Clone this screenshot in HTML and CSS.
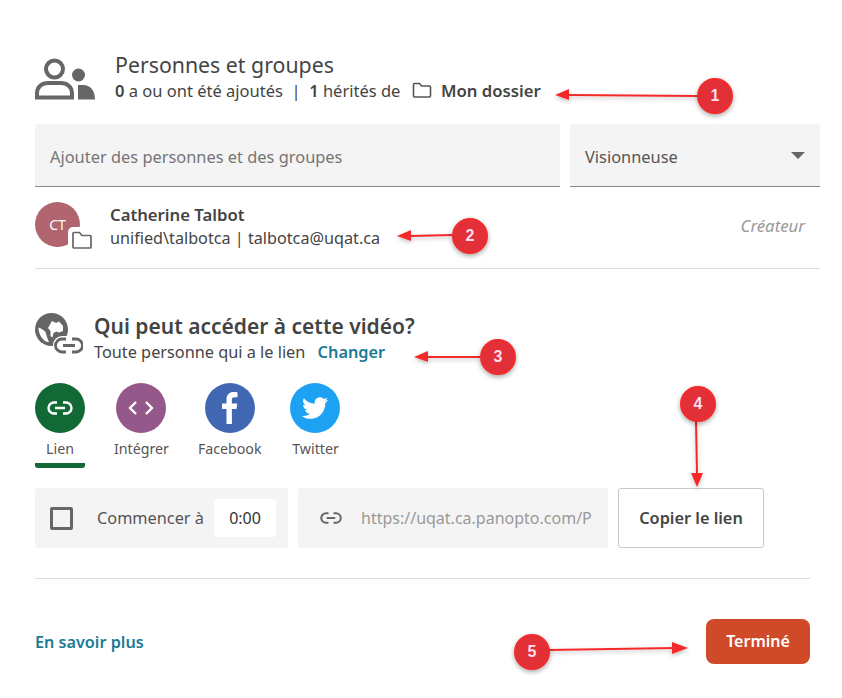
FILE: index.html
```html
<!DOCTYPE html>
<html lang="fr">
<head>
	<meta charset="utf-8"/>
	<title>Partager</title>
	<link rel="stylesheet" href="styles.css">
</head>
<body>
<div class="dialog">
	<div class="people-head">
		<svg class="people-icon" width="60" height="42" viewBox="0 0 60 42">
			<circle cx="19.500" cy="11" r="8.500" fill="none" stroke="#666" stroke-width="4"/>
			<path d="M2 39.500V35c0-6 5-10 11-10h13c6 0 11 4 11 10v4.500z" fill="none" stroke="#666" stroke-width="4"/>
			<circle cx="43.500" cy="17" r="6.500" fill="#666"/>
			<path d="M43 41.500V27h5c7 0 12 5 12 14.500z" fill="#666"/>
		</svg>
		<div>
			<h2 class="title">Personnes et groupes</h2>
			<p class="sub"><b>0</b> a ou ont été ajoutés &nbsp;|&nbsp; <b>1</b> hérités de
				<svg class="folder-inline" width="20" height="16" viewBox="0 0 20 16"><path d="M1.500 14V2.500c0-.6.4-1 1-1h5l2 2.500h8c.6 0 1 .4 1 1V14c0 .6-.4 1-1 1h-15c-.6 0-1-.4-1-1z" fill="none" stroke="#555" stroke-width="1.600"/></svg>
				<b class="folder-name">Mon dossier</b></p>
		</div>
	</div>

	<div class="add-row">
		<div class="field add-field">Ajouter des personnes et des groupes</div>
		<div class="field role-field">Visionneuse<span class="caret"></span></div>
	</div>

	<div class="person">
		<div class="avatar">CT
			<span class="avatar-badge">
				<svg width="22" height="20" viewBox="0 0 22 20"><path d="M2 17V3.500c0-.6.4-1 1-1h5.500l2.500 3h8c.6 0 1 .4 1 1V17c0 .6-.4 1-1 1H3c-.6 0-1-.4-1-1z" fill="#fff" stroke="#666" stroke-width="1.700"/></svg>
			</span>
		</div>
		<div class="person-text">
			<div class="person-name">Catherine Talbot</div>
			<div class="person-id">unified\talbotca | talbotca@uqat.ca</div>
		</div>
		<div class="person-role">Créateur</div>
	</div>

	<div class="access-head">
		<svg class="access-icon" width="48" height="42" viewBox="0 0 48 42">
			<circle cx="16.500" cy="17.500" r="16.500" fill="#666"/>
			<path d="M3.500 15.500c2.500 1 5 2 7 4.500 1 3 1.500 6 3.500 10-1 0-2 0-3-.5C6.500 27 3.500 21 3.500 15.500z" fill="#fff"/>
			<path d="M17 9l4 2 3-1.500 4 4.500v5l-4 1.500-2.500-1-3 1.500-1 4.500-2-1.500v-5l-2.500-3z" fill="#fff"/>
			<rect x="18" y="24" width="30" height="18" rx="9" fill="#fff"/>
			<path d="M31 27h-4a6.500 6.500 0 0 0 0 13h4M37 27h4a6.500 6.500 0 0 1 0 13h-4M28 33.500h12" fill="none" stroke="#666" stroke-width="2.800"/>
		</svg>
		<div>
			<h3 class="access-title">Qui peut accéder à cette vidéo?</h3>
			<p class="access-sub">Toute personne qui a le lien <a class="change">Changer</a></p>
		</div>
	</div>

	<div class="tabs">
		<div class="tab tab-active">
			<span class="disc disc-link">
				<svg width="26" height="14" viewBox="0 0 26 14"><path d="M10 1.500H7a5.500 5.500 0 0 0 0 11h3M16 1.500h3a5.500 5.500 0 0 1 0 11h-3M8 7h10" fill="none" stroke="#fff" stroke-width="2.400"/></svg>
			</span>
			<span class="tab-label">Lien</span>
		</div>
		<div class="tab">
			<span class="disc disc-embed">
				<svg width="26" height="14" viewBox="0 0 26 14"><path d="M8 1L2 7l6 6M18 1l6 6-6 6" fill="none" stroke="#fff" stroke-width="2.400"/></svg>
			</span>
			<span class="tab-label">Intégrer</span>
		</div>
		<div class="tab">
			<span class="disc disc-fb">
				<svg width="16" height="32" viewBox="0 0 16 32"><path d="M4.500 32V17H0v-5.500h4.500V7.500C4.500 2.500 7.500 0 11.500 0c2 0 3.500.2 4 .2v5h-3c-2.200 0-2.600 1-2.600 2.700v3.600h5.300l-.7 5.500h-4.600v15z" fill="#fff"/></svg>
			</span>
			<span class="tab-label">Facebook</span>
		</div>
		<div class="tab">
			<span class="disc disc-tw">
				<svg width="26" height="22" viewBox="0 0 24 20"><path d="M24 2.400c-.9.400-1.800.7-2.800.8 1-.6 1.800-1.600 2.200-2.700-1 .6-2 1-3.100 1.200C19.300.7 18 0 16.600 0c-2.700 0-4.900 2.200-4.900 4.900 0 .4 0 .8.100 1.100C7.700 5.800 4.100 3.900 1.700.9 1.200 1.600 1 2.500 1 3.400c0 1.700.9 3.200 2.200 4.100-.8 0-1.600-.2-2.200-.6v.1c0 2.400 1.700 4.400 3.900 4.800-.4.100-.8.200-1.300.2-.3 0-.6 0-.9-.1.600 2 2.400 3.400 4.600 3.400-1.700 1.300-3.800 2.100-6.100 2.100-.4 0-.8 0-1.200-.1C2.200 19.200 4.800 20 7.500 20c9.100 0 14-7.500 14-14v-.6c1-.7 1.800-1.600 2.500-3z" fill="#fff"/></svg>
			</span>
			<span class="tab-label">Twitter</span>
		</div>
	</div>

	<div class="link-row">
		<div class="panel start-panel">
			<span class="checkbox"></span>
			<span class="start-label">Commencer à</span>
			<span class="time">0:00</span>
		</div>
		<div class="panel url-panel">
			<svg class="url-icon" width="22" height="12" viewBox="0 0 26 14"><path d="M10 1.500H7a5.500 5.500 0 0 0 0 11h3M16 1.500h3a5.500 5.500 0 0 1 0 11h-3M8 7h10" fill="none" stroke="#666" stroke-width="2.400"/></svg>
			<span class="url">https://uqat.ca.panopto.com/P</span>
		</div>
		<div class="copy-btn">Copier le lien</div>
	</div>

	<div class="footer">
		<a class="more">En savoir plus</a>
		<div class="done-btn">Terminé</div>
	</div>
</div>

<!-- annotations par-dessus la capture -->
<svg class="arrows" width="842" height="698" viewBox="0 0 842 698">
	<defs>
		<filter id="soft" x="-20%" y="-300%" width="140%" height="700%"><feDropShadow dx="0" dy="2" stdDeviation="2" flood-color="#000" flood-opacity=".25"/></filter>
	</defs>
	<g fill="#f42a2a" stroke="#f42a2a" filter="url(#soft)">
		<path d="M697 96L568 95" stroke-width="2"/><path d="M555 95l14-6v11z" stroke="none"/>
		<path d="M452 235L410 236" stroke-width="2"/><path d="M397 236l14-6v11z" stroke="none"/>
		<path d="M480 357L427 357" stroke-width="2"/><path d="M414 357l14-6v11z" stroke="none"/>
		<path d="M696 421L697 474" stroke-width="2"/><path d="M697 487l-6-14h12z" stroke="none"/>
		<path d="M548 650L675 648" stroke-width="2"/><path d="M688 648l-16-6v12z" stroke="none"/>
	</g>
</svg>
<span class="mark mark-1">1</span>
<span class="mark mark-2">2</span>
<span class="mark mark-3">3</span>
<span class="mark mark-4">4</span>
<span class="mark mark-5">5</span>
</body>
</html>
```

FILE: styles.css
```css
*{margin: 0;padding: 0;box-sizing: border-box;}
body{
	background: #fff;
	color: #444;
	font-family: "Noto Sans", "Open Sans", sans-serif;
	font-size: 16px;
}
b{font-weight: 600;}
.dialog{
	width: 842px;
	height: 698px;
	padding: 50px 22px 0 35px;
	overflow: hidden;
}

/* personnes et groupes */
.people-head{
	display: flex;
	align-items: flex-start;
	gap: 20px;
	height: 74px;
}
.people-icon{
	margin-top: 8px;
}
.title{
	font-size: 21.300px;
	font-weight: 400;
	line-height: 29px;
	color: #444;
}
.sub{
	font-size: 16.500px;
	line-height: 24px;
	margin-top: 0;
}
.folder-inline{
	margin: 0 5px 0 7px;
	vertical-align: -1px;
}
.folder-name{
	font-size: 16.700px;
}
.add-row{
	display: flex;
	gap: 10px;
	height: 63px;
}
.field{
	display: flex;
	align-items: center;
	background: #f4f4f4;
	border-bottom: 1px solid #888;
	border-radius: 3px 3px 0 0;
	padding: 2px 15px 0;
	font-size: 16.400px;
}
.add-field{
	width: 525px;
	color: #757575;
}
.role-field{
	width: 250px;
	justify-content: space-between;
	color: #555;
}
.caret{
	width: 0;
	height: 0;
	border-left: 7px solid transparent;
	border-right: 7px solid transparent;
	border-top: 7px solid #666;
	margin-bottom: 1px;
}
.person{
	display: flex;
	height: 82px;
	padding-top: 15px;
	border-bottom: 1px solid #ddd;
}
.avatar{
	position: relative;
	width: 45px;
	height: 45px;
	flex: none;
	border-radius: 50%;
	background: #b0656f;
	color: #fff;
	font-size: 14px;
	line-height: 45px;
	text-align: center;
}
.avatar-badge{
	position: absolute;
	left: 33px;
	top: 25px;
	display: block;
	width: 25px;
	height: 24px;
	padding: 3px 0 0 2px;
	border-radius: 5px;
	background: #fff;
	line-height: 0;
}
.person-text{
	flex: 1;
	padding-left: 30px;
}
.person-name{
	font-size: 16.700px;
	font-weight: 600;
	line-height: 24px;
	margin-top: 1px;
}
.person-id{
	font-size: 16.200px;
	line-height: 22px;
}
.person-role{
	padding: 12px 15px 0 0;
	font-size: 16.800px;
	font-style: italic;
	color: #999;
}

/* acces */
.access-head{
	display: flex;
	gap: 11px;
	height: 71px;
	margin-top: 43px;
}
.access-title{
	font-size: 21px;
	font-weight: 600;
	line-height: 28px;
	color: #444;
}
.access-sub{
	font-size: 16.300px;
	line-height: 24px;
}
.change{
	margin-left: 8px;
	font-weight: 600;
	color: #1b7a95;
}
.tabs{
	display: flex;
	gap: 29px;
}
.tab{
	display: flex;
	flex-direction: column;
	align-items: center;
	min-width: 50px;
	height: 85px;
	border-bottom: 5px solid transparent;
}
.tab-active{
	border-bottom-color: #116a35;
	border-radius: 0 0 3px 3px;
}
.disc{
	display: flex;
	align-items: center;
	justify-content: center;
	width: 50px;
	height: 50px;
	border-radius: 50%;
}
.disc-link{background: #116a35;}
.disc-embed{background: #95588a;}
.disc-fb{background: #4267b2;}
.disc-tw{background: #1da1f2;}
.tab-label{
	margin-top: 6px;
	font-size: 14.200px;
	line-height: 20px;
	color: #555;
}
.link-row{
	display: flex;
	gap: 10px;
	margin-top: 20px;
	height: 60px;
}
.panel{
	display: flex;
	align-items: center;
	background: #f4f4f4;
	border-radius: 3px;
}
.start-panel{
	width: 253px;
	padding: 0 12px 0 15px;
}
.checkbox{
	width: 23px;
	height: 23px;
	border: 3px solid #666;
	border-radius: 2px;
	flex: none;
}
.start-label{
	margin-left: 24px;
	font-size: 16.300px;
	color: #555;
	white-space: nowrap;
}
.time{
	margin-left: auto;
	width: 62px;
	height: 38px;
	border-radius: 3px;
	background: #fff;
	color: #333;
	font-size: 16px;
	line-height: 38px;
	text-align: center;
}
.url-panel{
	width: 310px;
	padding: 0 15px 0 22px;
	gap: 19px;
	overflow: hidden;
}
.url-icon{
	flex: none;
}
.url{
	overflow: hidden;
	white-space: nowrap;
	font-size: 16px;
	color: #999;
}
.copy-btn{
	width: 146px;
	border: 1px solid #c8c8c8;
	border-radius: 3px;
	font-size: 16.300px;
	font-weight: 600;
	line-height: 58px;
	text-align: center;
	color: #444;
}
.footer{
	display: flex;
	align-items: center;
	justify-content: space-between;
	width: 775px;
	height: 116px;
	margin-top: 30px;
	padding-top: 10px;
	border-top: 1px solid #ddd;
}
.more{
	font-size: 16.200px;
	font-weight: 600;
	color: #1b7a95;
}
.done-btn{
	width: 104px;
	height: 45px;
	border-radius: 8px;
	background: #ce4a29;
	color: #fff;
	font-size: 16px;
	font-weight: 600;
	line-height: 45px;
	text-align: center;
}

/* annotations */
.arrows{
	position: absolute;
	left: 0;
	top: 0;
}
.mark{
	position: absolute;
	width: 36px;
	height: 36px;
	border: 2px solid #f42a2a;
	border-radius: 50%;
	background: #e23039;
	box-shadow: 0 2px 5px rgba(0,0,0,.35);
	color: #fde;
	font-family: "Liberation Sans", sans-serif;
	font-size: 16px;
	font-weight: 700;
	line-height: 32px;
	text-align: center;
}
.mark-1{left: 697px;top: 78px;}
.mark-2{left: 452px;top: 218px;}
.mark-3{left: 480px;top: 339px;}
.mark-4{left: 680px;top: 386px;}
.mark-5{left: 514px;top: 634px;}
```
